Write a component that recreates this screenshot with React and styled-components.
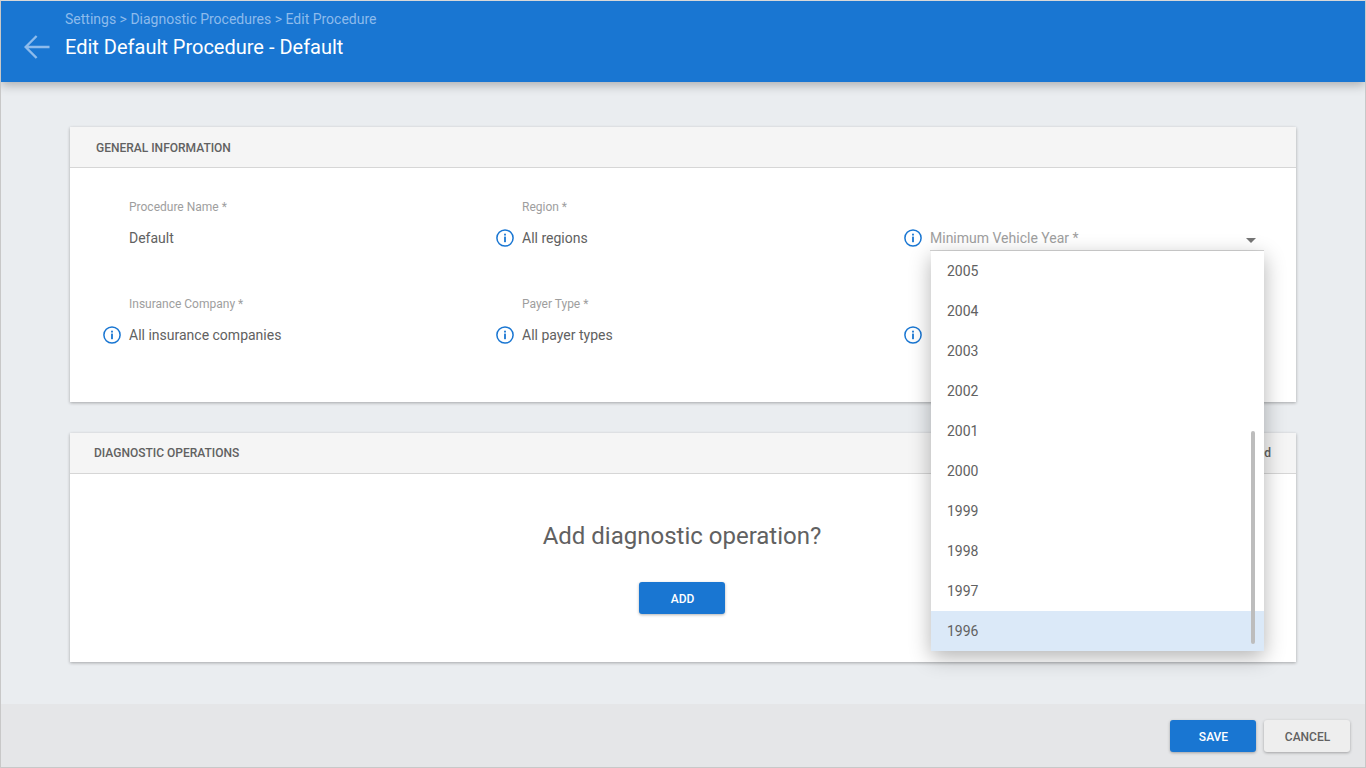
import React from 'react'
import styled, { createGlobalStyle } from 'styled-components'

const years = ['2005', '2004', '2003', '2002', '2001', '2000', '1999', '1998', '1997', '1996']

const InfoIcon = () => (
  <svg width="18" height="18" viewBox="0 0 18 18" fill="none">
    <circle cx="9" cy="9" r="8.1" stroke="#1976d2" strokeWidth="1.5" />
    <rect x="8.1" y="7.6" width="1.8" height="5.6" fill="#1976d2" />
    <rect x="8.1" y="4.7" width="1.8" height="1.8" fill="#1976d2" />
  </svg>
)

const Field = ({ label, value, info, placeholder, children }) => (
  <FieldBox>
    <IconSlot>{info && <InfoIcon />}</IconSlot>
    <FieldBody>
      <FieldLabel>{label}</FieldLabel>
      {value && <FieldValue>{value}</FieldValue>}
      {placeholder && (
        <SelectRow>
          <Placeholder>{placeholder}</Placeholder>
          <Caret />
        </SelectRow>
      )}
      {children}
    </FieldBody>
  </FieldBox>
)

export default function App() {
  return (
    <>
      <GlobalStyle />
      <Page>
        <TopBar>
          <BackButton>
            <svg width="26" height="24" viewBox="0 0 26 24" fill="none">
              <path d="M25.5 12H1.8M12.6 1L1.6 12l11 11" stroke="#8dbbec" strokeWidth="2.4" />
            </svg>
          </BackButton>
          <TitleBlock>
            <Crumbs>Settings &gt; Diagnostic Procedures &gt; Edit Procedure</Crumbs>
            <Title>Edit Default Procedure - Default</Title>
          </TitleBlock>
        </TopBar>

        <Main>
          <Card>
            <CardHeader>
              <CardTitle $inset={26} $drop={1}>GENERAL INFORMATION</CardTitle>
            </CardHeader>
            <FormGrid>
              <Field label="Procedure Name *" value="Default" />
              <Field label="Region *" value="All regions" info />
              <Field info placeholder="Minimum Vehicle Year *">
                <Menu>
                  {years.map((y) => (
                    <MenuItem key={y} $active={y === '1996'}>{y}</MenuItem>
                  ))}
                  <ScrollThumb />
                </Menu>
              </Field>
              <Field label="Insurance Company *" value="All insurance companies" info />
              <Field label="Payer Type *" value="All payer types" info />
              <Field info />
            </FormGrid>
          </Card>

          <Card>
            <CardHeader>
              <CardTitle $inset={24}>DIAGNOSTIC OPERATIONS</CardTitle>
              <HeaderNote>Advanced</HeaderNote>
            </CardHeader>
            <EmptyState>
              <EmptyTitle>Add diagnostic operation?</EmptyTitle>
              <Button $primary>ADD</Button>
            </EmptyState>
          </Card>
        </Main>

        <Footer>
          <Button $primary>SAVE</Button>
          <Button>CANCEL</Button>
        </Footer>
      </Page>
    </>
  )
}

const GlobalStyle = createGlobalStyle`
  * { box-sizing: border-box; }
  body {
    margin: 0;
    font-family: Roboto, "Liberation Sans", sans-serif;
    color: #616161;
  }
`

const Page = styled.div`
  width: 1366px;
  height: 768px;
  display: flex;
  flex-direction: column;
  overflow: hidden;
  border: 1px solid #c8c8c8;
  border-top-color: #d8d8d8;
  background: #eaedf0;
`

const TopBar = styled.header`
  height: 81px;
  flex: none;
  display: flex;
  background: #1976d2;
  box-shadow: 0 3px 10px rgba(0, 0, 0, 0.28);
  position: relative;
  z-index: 2;
`

const BackButton = styled.div`
  width: 64px;
  flex: none;
  padding: 34px 0 0 23px;
`

const TitleBlock = styled.div`
  padding-top: 10px;
`

const Crumbs = styled.div`
  font-size: 14px;
  line-height: 16px;
  color: #8dbbec;
`

const Title = styled.h1`
  margin: 7px 0 0;
  font-size: 20px;
  line-height: 26px;
  font-weight: 400;
  color: #fff;
`

const Main = styled.main`
  flex: 1;
  padding: 45px 69px 0 69px;
  display: flex;
  flex-direction: column;
  gap: 31px;
`

const Card = styled.section`
  background: #fff;
  box-shadow: 0 1px 3px rgba(0, 0, 0, 0.3);
`

const CardHeader = styled.div`
  height: 41px;
  display: flex;
  align-items: center;
  justify-content: space-between;
  padding-right: 25px;
  background: #f5f5f5;
  border-bottom: 1px solid #d6d6d6;
`

const CardTitle = styled.h2`
  margin: 0;
  padding-left: ${(props) => props.$inset}px;
  padding-top: ${(props) => props.$drop || 0}px;
  font-size: 12px;
  line-height: 16px;
  font-weight: 500;
  color: #616161;
`

const HeaderNote = styled.span`
  font-size: 12px;
  font-weight: 500;
  color: #616161;
`

const FormGrid = styled.div`
  height: 234px;
  display: grid;
  grid-template-columns: 393px 408px 360px;
  grid-auto-rows: 52px;
  row-gap: 45px;
  padding: 31px 0 0 33px;
`

const FieldBox = styled.div`
  display: flex;
  gap: 8px;
`

const IconSlot = styled.div`
  width: 18px;
  flex: none;
  padding-top: 30px;
`

const FieldBody = styled.div`
  flex: 1;
  position: relative;
  min-width: 0;
`

const FieldLabel = styled.label`
  display: block;
  height: 16px;
  font-size: 12px;
  line-height: 16px;
  color: #9e9e9e;
`

const FieldValue = styled.div`
  margin-top: 11px;
  font-size: 14px;
  line-height: 24px;
  color: #616161;
`

const SelectRow = styled.div`
  margin-top: 11px;
  height: 25px;
  display: flex;
  align-items: center;
  justify-content: space-between;
  padding-right: 8px;
  border-bottom: 1px solid #d6d6d6;
`

const Placeholder = styled.span`
  font-size: 14px;
  color: #9e9e9e;
`

const Caret = styled.span`
  width: 0;
  height: 0;
  margin-top: 4px;
  border-left: 5px solid transparent;
  border-right: 5px solid transparent;
  border-top: 5px solid #757575;
`

const Menu = styled.div`
  position: absolute;
  top: 52px;
  left: 1px;
  right: 0;
  z-index: 5;
  background: #fff;
  box-shadow: 0 6px 20px rgba(0, 0, 0, 0.3);
`

const MenuItem = styled.div`
  height: 40px;
  display: flex;
  align-items: center;
  padding-left: 16px;
  font-size: 14px;
  color: #616161;
  background: ${(props) => (props.$active ? '#dbe9f8' : '#fff')};
`

const ScrollThumb = styled.div`
  position: absolute;
  top: 180px;
  right: 9px;
  width: 4px;
  height: 213px;
  border-radius: 2px;
  background: #bdbdbd;
`

const EmptyState = styled.div`
  height: 188px;
  display: flex;
  flex-direction: column;
  align-items: center;
  padding-top: 46px;
  padding-right: 2px;
`

const EmptyTitle = styled.div`
  font-size: 24px;
  line-height: 32px;
  color: #616161;
`

const Button = styled.button`
  width: 86px;
  height: 32px;
  padding: 1px 0 0 1px;
  border: none;
  border-radius: 3px;
  font-family: inherit;
  font-size: 12px;
  font-weight: 500;
  color: ${(props) => (props.$primary ? '#fff' : '#616161')};
  background: ${(props) => (props.$primary ? '#1976d2' : '#eeeeee')};
  box-shadow: 0 1px 3px rgba(0, 0, 0, 0.3);
  cursor: pointer;

  ${EmptyState} & {
    margin-top: 30px;
  }
`

const Footer = styled.footer`
  height: 63px;
  flex: none;
  display: flex;
  justify-content: flex-end;
  align-items: flex-start;
  gap: 8px;
  padding: 16px 15px 0 0;
  background: #e5e6e8;
`
